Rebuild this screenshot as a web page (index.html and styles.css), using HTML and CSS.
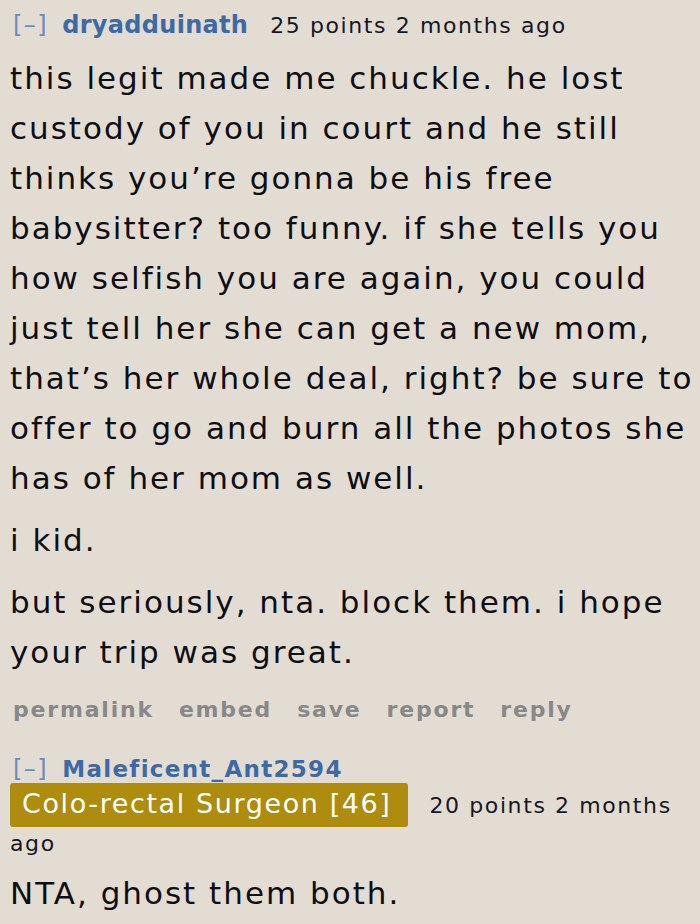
FILE: index.html
```html
<!DOCTYPE html>
<html>
<head>
<meta charset="utf-8">
<link rel="stylesheet" href="styles.css">
</head>
<body>
<div class="comment">
  <div class="tagline">
    <span class="expand">[–]</span>
    <span class="author">dryadduinath</span>
    <span class="meta">25 points 2 months ago</span>
  </div>
  <div class="md">
    <p>this legit made me chuckle. he lost custody of you in court and he still thinks you’re gonna be his free babysitter? too funny. if she tells you how selfish you are again, you could just tell her she can get a new mom, that’s her whole deal, right? be sure to offer to go and burn all the photos she has of her mom as well.</p>
    <p>i kid.</p>
    <p>but seriously, nta. block them. i hope your trip was great.</p>
  </div>
  <ul class="buttons">
    <li>permalink</li>
    <li>embed</li>
    <li>save</li>
    <li>report</li>
    <li>reply</li>
  </ul>
</div>
<div class="comment second">
  <div class="tagline">
    <span class="expand">[–]</span>
    <span class="author">Maleficent_Ant2594</span>
  </div>
  <div class="tagline2"><span class="flair">Colo-rectal Surgeon [46]</span><span class="score">20 points</span> <span class="time">2 months</span> <span class="time">ago</span></div>
  <div class="md">
    <p>NTA, ghost them both.</p>
  </div>
</div>
</body>
</html>
```

FILE: styles.css
```css
html, body {
  margin: 0;
  padding: 0;
  background: #e3dcd3;
}
body {
  font-family: "DejaVu Sans", Verdana, sans-serif;
  color: #111;
  width: 690px;
  padding-left: 10px;
}
.tagline {
  display: flex;
  align-items: baseline;
  line-height: 30px;
  padding-top: 10px;
}
.expand {
  font-size: 24px;
  letter-spacing: 1.5px;
  color: #6b8cb8;
  margin-left: 3px;
  margin-right: 14px;
}
.author {
  font-size: 24px;
  letter-spacing: 0.3px;
  color: #3d6aa5;
  font-weight: bold;
  margin-right: 22px;
}
.meta {
  color: #161622;
  font-size: 22px;
  letter-spacing: 1.6px;
}
.md {
  margin-top: 12px;
  font-size: 31px;
  letter-spacing: 2px;
  line-height: 50px;
  color: #0e0e12;
}
.md p {
  margin: 0 0 12px 0;
}
.md p:last-child {
  margin-bottom: 0;
}
.buttons {
  list-style: none;
  margin: 13px 0 0 0;
  padding: 0 0 0 3px;
  display: flex;
  gap: 25px;
  font-size: 22px;
  font-weight: bold;
  letter-spacing: 1.8px;
  color: #888888;
  line-height: 40px;
}
.second {
  margin-top: 25px;
}
.second .tagline {
  padding-top: 0;
  line-height: 28px;
}
.second .author {
  font-size: 23px;
  letter-spacing: 1.3px;
}
.tagline2 {
  color: #161622;
  font-size: 22px;
  letter-spacing: 1.6px;
  line-height: 34px;
}
.flair {
  display: inline-block;
  background: #ae8c0d;
  color: #fff;
  font-size: 27px;
  line-height: 32px;
  padding: 5px 17px 7px 12px;
  border-radius: 3px;
  margin-right: 21px;
}
.second .md {
  margin-top: 7px;
}
```
